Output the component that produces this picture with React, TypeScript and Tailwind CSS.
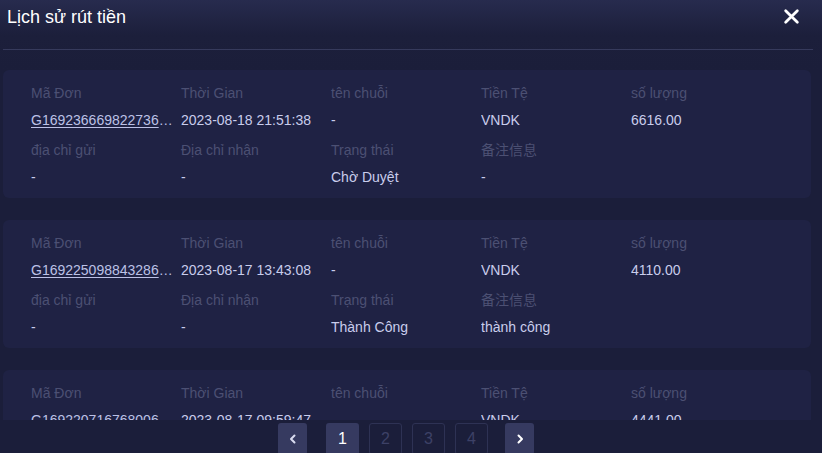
import React from "react";

type Rec = {
  id: string;
  time: string;
  chain: string;
  currency: string;
  amount: string;
  from: string;
  to: string;
  status: string;
  note: string;
};

const records: Rec[] = [
  { id: "G1692366698227360842", time: "2023-08-18 21:51:38", chain: "-", currency: "VNDK", amount: "6616.00", from: "-", to: "-", status: "Chờ Duyệt", note: "-" },
  { id: "G1692250988432864123", time: "2023-08-17 13:43:08", chain: "-", currency: "VNDK", amount: "4110.00", from: "-", to: "-", status: "Thành Công", note: "thành công" },
  { id: "G1692207167680061234", time: "2023-08-17 09:59:47", chain: "-", currency: "VNDK", amount: "4441.00", from: "-", to: "-", status: "Thành Công", note: "thành công" },
];

function Cell({ label, value, link, strong }: { label: string; value: string; link?: boolean; strong?: boolean }) {
  return (
    <div className="w-[150px] pr-[6px] flex flex-col">
      <div className="h-[20px] leading-[20px] text-[14px] text-[#4c5073] whitespace-nowrap">{label}</div>
      <div
        className={
          "mt-[7px] h-[20px] leading-[20px] text-[14px] whitespace-nowrap overflow-hidden text-ellipsis " +
          (link ? "underline text-[#bcc1e6] underline-offset-2" : strong ? "text-[#c9cdec] font-medium" : "text-[#c9cdec]")
        }
      >
        {value}
      </div>
    </div>
  );
}

function Card({ r }: { r: Rec }) {
  return (
    <div className="ml-[3px] mr-[11px] h-[128px] rounded-[6px] bg-[#1f2244] pl-[28px] pt-[13px] shrink-0">
      <div className="flex">
        <Cell label="Mã Đơn" value={r.id} link />
        <Cell label="Thời Gian" value={r.time} />
        <Cell label="tên chuỗi" value={r.chain} />
        <Cell label="Tiền Tệ" value={r.currency} strong />
        <Cell label="số lượng" value={r.amount} strong />
      </div>
      <div className="flex mt-[10px]">
        <Cell label="địa chỉ gửi" value={r.from} />
        <Cell label="Địa chỉ nhận" value={r.to} />
        <Cell label="Trạng thái" value={r.status} />
        <Cell label="备注信息" value={r.note} />
      </div>
    </div>
  );
}

export default function App() {
  return (
    <div
      className="w-[822px] h-[453px] overflow-hidden flex flex-col bg-[#1b1e3a] bg-gradient-to-b from-[#272b4e] via-[#1c1f3b] to-[#1b1e3a] bg-no-repeat bg-[length:100%_70px]"
      style={{ fontFamily: '"Liberation Sans", Arial, "Noto Sans CJK SC", sans-serif' }}
    >
      <div className="h-[49px] shrink-0 flex items-start justify-between pl-[7px] pr-[22px] pt-[6px]">
        <div className="text-[18px] leading-[22px] text-white">Lịch sử rút tiền</div>
        <svg width="17" height="17" viewBox="0 0 16 16" className="mt-[2px]">
          <path d="M2.5 2.5 L13.5 13.5 M13.5 2.5 L2.5 13.5" stroke="white" strokeWidth="2.6" strokeLinecap="round" />
        </svg>
      </div>
      <div className="ml-[3px] mr-[9px] h-px bg-[#363a5c] shrink-0" />
      <div className="flex-1 min-h-0 overflow-hidden flex flex-col gap-[22px] pt-[20px]">
        {records.map((r) => (
          <Card key={r.id} r={r} />
        ))}
      </div>
      <div className="h-[33px] shrink-0 bg-[#1b1e3a] flex items-start justify-center pt-[3px] pr-[10px]">
        <div className="flex items-center">
          <button className="w-[29px] h-[32px] rounded-[3px] bg-[#363a60] flex items-center justify-center">
            <svg width="12" height="12" viewBox="0 0 12 12">
              <path d="M7.5 2.5 L4 6 L7.5 9.5" stroke="#d9dcf0" strokeWidth="2" fill="none" strokeLinecap="round" strokeLinejoin="round" />
            </svg>
          </button>
          <div className="ml-[19px] flex gap-[10px]">
            <div className="w-[33px] h-[32px] rounded-[3px] bg-[#363a60] text-white text-[16px] flex items-center justify-center">1</div>
            <div className="w-[33px] h-[32px] rounded-[3px] border border-[#2e3254] text-[#3d4166] text-[16px] flex items-center justify-center">2</div>
            <div className="w-[33px] h-[32px] rounded-[3px] border border-[#2e3254] text-[#3d4166] text-[16px] flex items-center justify-center">3</div>
            <div className="w-[33px] h-[32px] rounded-[3px] border border-[#2e3254] text-[#3d4166] text-[16px] flex items-center justify-center">4</div>
          </div>
          <button className="ml-[17px] w-[29px] h-[32px] rounded-[3px] bg-[#363a60] flex items-center justify-center">
            <svg width="12" height="12" viewBox="0 0 12 12">
              <path d="M4.5 2.5 L8 6 L4.5 9.5" stroke="white" strokeWidth="2" fill="none" strokeLinecap="round" strokeLinejoin="round" />
            </svg>
          </button>
        </div>
      </div>
    </div>
  );
}
